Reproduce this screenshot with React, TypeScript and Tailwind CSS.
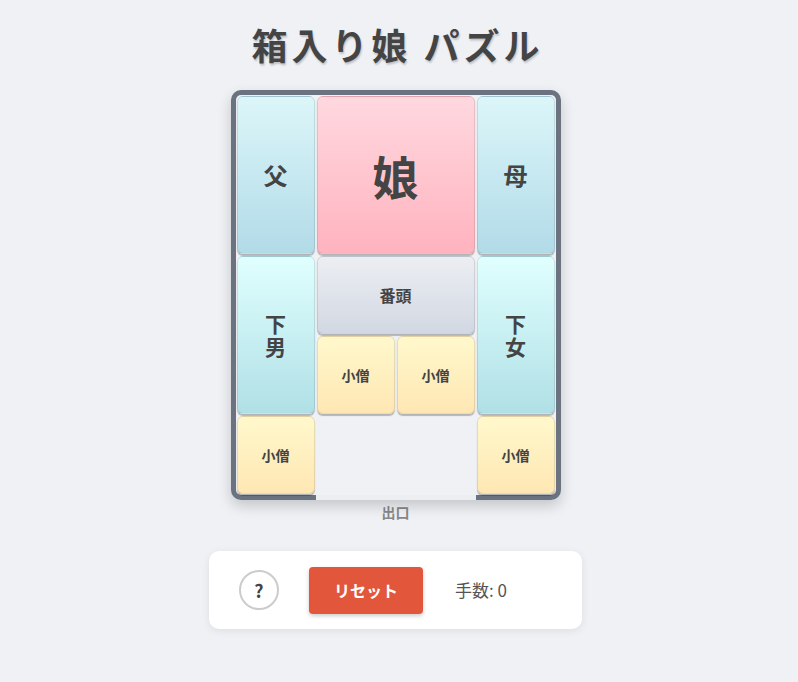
import React from "react";

const font = { fontFamily: '"Noto Sans CJK JP", "Noto Sans", sans-serif' };

type TileProps = { cls: string; children: React.ReactNode; text: string };
function Tile({ cls, children, text }: TileProps) {
  return (
    <div
      className={`m-[1px] rounded-[6px] border border-black/10 shadow-[0_2px_1px_rgba(0,0,0,0.25)] flex items-center justify-center font-bold text-[#444] ${cls} ${text}`}
    >
      {children}
    </div>
  );
}

export default function App() {
  const blue = "bg-gradient-to-b from-[#dcf6f9] to-[#b2dbe8]";
  const cyan = "bg-gradient-to-b from-[#e0ffff] to-[#b0e0e6]";
  const yellow = "bg-gradient-to-b from-[#fff8cc] to-[#ffe7b3]";
  return (
    <div className="min-h-[682px] w-full bg-[#eff1f5] flex flex-col items-center pr-[7px]" style={font}>
      <h1 className="mt-[18px] pl-[4px] h-[52px] leading-[52px] text-[36px] font-bold text-[#444] tracking-[4px] [text-shadow:1px_2px_2px_rgba(0,0,0,0.2)]">
        箱入り娘 パズル
      </h1>
      <div className="mt-[20px] relative w-[330px] h-[410px] border-[5px] border-[#6b7280] rounded-[10px] bg-[#eff1f5] shadow-[0_6px_14px_rgba(0,0,0,0.18)]">
        <div className="grid grid-cols-[repeat(4,80px)] grid-rows-[repeat(5,80px)]">
          <Tile cls={`row-span-2 ${blue}`} text="text-[24px]">父</Tile>
          <Tile cls="row-span-2 col-span-2 bg-gradient-to-b from-[#ffd8df] to-[#ffb3bf]" text="text-[46px]">娘</Tile>
          <Tile cls={`row-span-2 ${blue}`} text="text-[24px]">母</Tile>
          <Tile cls={`row-span-2 ${cyan}`} text="text-[21px]">
            <span className="block text-center leading-[23px]">下<br />男</span>
          </Tile>
          <Tile cls="col-span-2 bg-gradient-to-b from-[#eceef2] to-[#d2d8e3]" text="text-[16px]">番頭</Tile>
          <Tile cls={`row-span-2 ${cyan}`} text="text-[21px]">
            <span className="block text-center leading-[23px]">下<br />女</span>
          </Tile>
          <Tile cls={`col-start-2 row-start-4 ${yellow}`} text="text-[14px]">小僧</Tile>
          <Tile cls={`col-start-3 row-start-4 ${yellow}`} text="text-[14px]">小僧</Tile>
          <Tile cls={`col-start-1 row-start-5 ${yellow}`} text="text-[14px]">小僧</Tile>
          <Tile cls={`col-start-4 row-start-5 ${yellow}`} text="text-[14px]">小僧</Tile>
        </div>
        <div className="absolute left-[80px] bottom-[-5px] w-[160px] h-[5px] bg-[#eceef2]" />
      </div>
      <div className="mt-[2px] h-[20px] leading-[20px] text-[14px] font-bold text-[#888]">出口</div>
      <div className="mt-[29px] w-[373px] h-[78px] bg-white rounded-[10px] shadow-[0_2px_8px_rgba(0,0,0,0.08)] flex items-center">
        <div className="ml-[30px] w-[40px] h-[40px] rounded-full border-2 border-[#ccc] flex items-center justify-center text-[18px] font-bold text-[#444]">
          ?
        </div>
        <button className="ml-[30px] w-[114px] h-[47px] rounded-[4px] bg-[#e2573b] text-white font-bold text-[16px] shadow-[0_2px_4px_rgba(0,0,0,0.2)]">
          リセット
        </button>
        <div className="ml-[32px] text-[17px] text-[#555]">
          手数: 0
        </div>
      </div>
    </div>
  );
}
